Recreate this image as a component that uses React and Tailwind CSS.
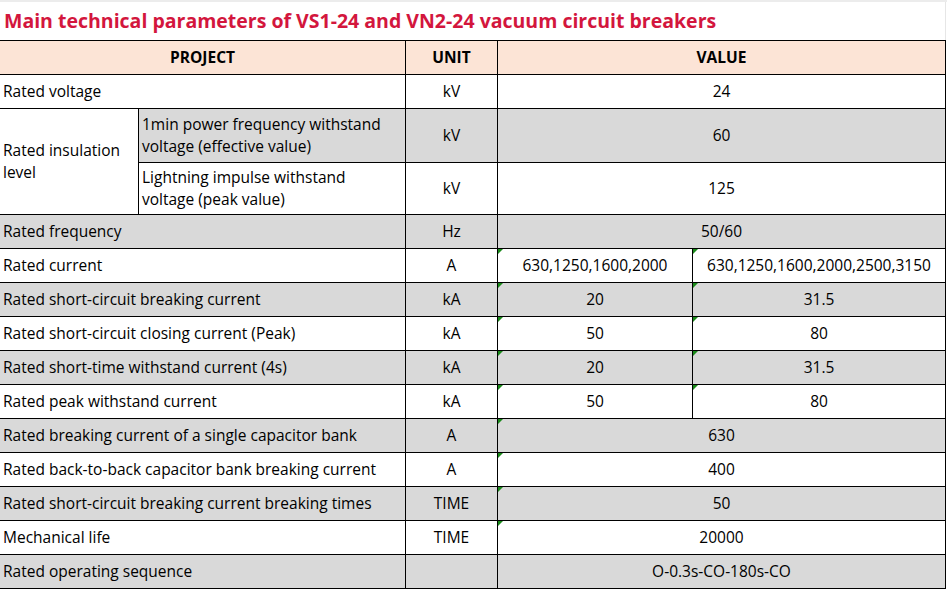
import React from "react";

const font = { fontFamily: '"Open Sans", "Noto Sans CJK SC", sans-serif' };

function Tri() {
  return (
    <span className="absolute left-0 top-0 h-0 w-0 border-t-[5px] border-r-[5px] border-t-[#1a8a1a] border-r-transparent" />
  );
}

function Cell({ children, className = "", center, mark }) {
  return (
    <div
      className={`relative flex items-center pb-[2px] text-[15.5px] leading-[22px] text-black ${center ? "justify-center text-center" : "pl-[3px]"} ${className}`}
    >
      {mark && <Tri />}
      {children}
    </div>
  );
}

const rows = [
  { label: "Rated frequency", unit: "Hz", value: "50/60", gray: true },
  { label: "Rated current", unit: "A", v1: "630,1250,1600,2000", v2: "630,1250,1600,2000,2500,3150", mark: true },
  { label: "Rated short-circuit breaking current", unit: "kA", v1: "20", v2: "31.5", gray: true, mark: true },
  { label: "Rated short-circuit closing current (Peak)", unit: "kA", v1: "50", v2: "80", mark: true },
  { label: "Rated short-time withstand current (4s)", unit: "kA", v1: "20", v2: "31.5", gray: true, mark: true },
  { label: "Rated peak withstand current", unit: "kA", v1: "50", v2: "80", mark: true },
  { label: "Rated breaking current of a single capacitor bank", unit: "A", value: "630", gray: true, mark: true },
  { label: "Rated back-to-back capacitor bank breaking current", unit: "A", value: "400", mark: true },
  { label: "Rated short-circuit breaking current breaking times", unit: "TIME", value: "50", gray: true, mark: true },
  { label: "Mechanical life", unit: "TIME", value: "20000", mark: true },
  { label: "Rated operating sequence", unit: "", value: "O-0.3s-CO-180s-CO", gray: true },
];

export default function App() {
  return (
    <div className="h-[590px] w-[947px] overflow-hidden border-t-2 border-[#ececec] bg-white" style={font}>
      <div className="flex h-[38px] w-[946px] items-center border-r border-[#e6e6e6] pb-[1px] pl-[4px]">
        <h1 className="text-[19.5px] font-bold text-[#d3163d]">
          Main technical parameters of VS1-24 and VN2-24 vacuum circuit breakers
        </h1>
      </div>
      <div className="grid w-[946px] grid-cols-[138px_266px_91px_194px_252px] grid-rows-[33px_33px_53px_51px_repeat(11,33px)] gap-px bg-black pb-px pr-px pt-px">
        <Cell center className="col-span-2 bg-[#fce4d6] font-bold">PROJECT</Cell>
        <Cell center className="bg-[#fce4d6] font-bold">UNIT</Cell>
        <Cell center className="col-span-2 bg-[#fce4d6] font-bold">VALUE</Cell>

        <Cell className="col-span-2 bg-white">Rated voltage</Cell>
        <Cell center className="bg-white">kV</Cell>
        <Cell center className="col-span-2 bg-white">24</Cell>

        <Cell className="row-span-2 bg-white">
          <span>
            Rated insulation
            <br />
            level
          </span>
        </Cell>
        <Cell className="bg-[#d9d9d9]">
          <span>
            1min power frequency withstand
            <br />
            voltage (effective value)
          </span>
        </Cell>
        <Cell center className="bg-[#d9d9d9]">kV</Cell>
        <Cell center className="col-span-2 bg-[#d9d9d9]">60</Cell>

        <Cell className="bg-white">
          <span>
            Lightning impulse withstand
            <br />
            voltage (peak value)
          </span>
        </Cell>
        <Cell center className="bg-white">kV</Cell>
        <Cell center className="col-span-2 bg-white">125</Cell>

        {rows.map((r) => {
          const bg = r.gray ? "bg-[#d9d9d9]" : "bg-white";
          return (
            <React.Fragment key={r.label}>
              <Cell className={`col-span-2 ${bg}`}>{r.label}</Cell>
              <Cell center className={bg}>{r.unit}</Cell>
              {r.value !== undefined ? (
                <Cell center mark={r.mark} className={`col-span-2 ${bg}`}>{r.value}</Cell>
              ) : (
                <>
                  <Cell center mark={r.mark} className={bg}>{r.v1}</Cell>
                  <Cell center mark={r.mark} className={bg}>{r.v2}</Cell>
                </>
              )}
            </React.Fragment>
          );
        })}
      </div>
    </div>
  );
}
